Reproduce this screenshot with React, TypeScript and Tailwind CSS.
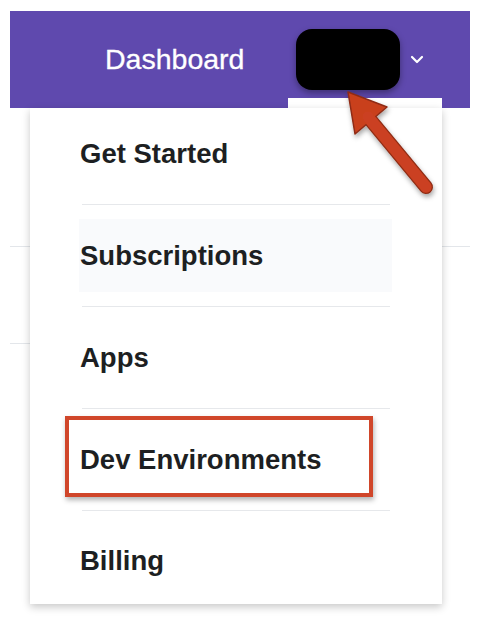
const items = ["Get Started", "Subscriptions", "Apps", "Dev Environments", "Billing"];

function Chevron() {
  return (
    <svg width="14" height="9" viewBox="0 0 14 9" className="ml-[10px]">
      <polyline points="2,2 7,7 12,2" fill="none" stroke="#fff" strokeWidth="2.2" strokeLinecap="round" strokeLinejoin="round" />
    </svg>
  );
}

function Arrow() {
  return (
    <svg className="absolute left-0 top-0" width="484" height="626" viewBox="0 0 484 626">
      <defs>
        <filter id="sh" x="-20%" y="-20%" width="140%" height="140%">
          <feDropShadow dx="1" dy="3" stdDeviation="2.5" floodColor="#000" floodOpacity="0.35" />
        </filter>
      </defs>
      <g filter="url(#sh)">
        <line x1="368" y1="117" x2="426" y2="187" stroke="#8f2c14" strokeWidth="14" strokeLinecap="round" />
        <polygon points="348,92 387,107 355,134" fill="#c9401f" stroke="#8f2c14" strokeWidth="1.5" strokeLinejoin="round" />
        <line x1="368" y1="117" x2="426" y2="187" stroke="#cb4120" strokeWidth="11.5" strokeLinecap="round" />
      </g>
    </svg>
  );
}

export default function App() {
  return (
    <div className="relative h-[626px] w-[484px] overflow-hidden bg-white font-['Liberation_Sans',Arial,sans-serif]">
      <div className="ml-[10px] mt-[11px] flex h-[97px] w-[460px] items-center bg-[#5f49ae] pl-[95px]">
        <span className="text-[28.5px] text-white [-webkit-text-stroke:0.3px_white]">Dashboard</span>
        <div className="ml-[52px] h-[61px] w-[104px] rounded-[16px] bg-black shadow-[0_3px_6px_rgba(0,0,0,0.35)]" />
        <Chevron />
      </div>
      <div className="ml-[10px] mt-[138px] h-px w-[460px] bg-[#e3e6ea]" />
      <div className="ml-[10px] mt-[96px] h-px w-[240px] bg-[#e3e6ea]" />

      {/* dropdown */}
      <div className="absolute left-[288px] top-[98px] h-[12px] w-[154px] bg-white" />
      <div className="absolute left-[30px] top-[108px] flex w-[412px] flex-col bg-white shadow-[0_3px_8px_rgba(0,0,0,0.22)]">
        {items.map((label, i) => (
          <div key={label}>
            {i > 0 && <div className="ml-[52px] h-px w-[308px] bg-[#e6e8eb]" />}
            <div
              className={
                i === 0
                  ? "flex h-[96px] items-center pb-[4px]"
                  : i === 4
                  ? "flex h-[93px] items-center pt-[6px]"
                  : "flex h-[101px] items-center"
              }
            >
              <div
                className={
                  i === 1
                    ? "ml-[49px] flex h-[73px] w-[313px] items-center bg-[#f9fafc] pl-px"
                    : "ml-[50px] flex items-center"
                }
              >
                <span className="text-[27.5px] font-bold text-[#1d1f22]">{label}</span>
              </div>
            </div>
          </div>
        ))}
      </div>

      {/* annotations */}
      <div className="absolute left-[65px] top-[416px] h-[81px] w-[308px] border-[4px] border-[#d0462a] shadow-[1px_3px_5px_rgba(0,0,0,0.3)]" />
      <Arrow />
    </div>
  );
}
